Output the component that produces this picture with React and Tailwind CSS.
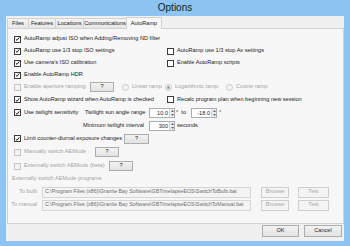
import React from 'react';

const Check = ({ checked, disabled }) => (
  <span
    className={`w-[7px] h-[7px] border flex items-center justify-center shrink-0 ${
      disabled ? 'border-[#c4c4c4] bg-[#f4f4f4]' : 'border-[#3c3c3c] bg-white'
    }`}
  >
    {checked && (
      <svg viewBox="0 0 7 7" className="w-[6px] h-[6px]">
        <path d="M1 3.6 L2.8 5.4 L6 1.2" stroke="#1a1a1a" strokeWidth="1.4" fill="none" />
      </svg>
    )}
  </span>
);

const Radio = ({ selected }) => (
  <span className="w-[7px] h-[7px] rounded-full border border-[#c8c8c8] bg-[#f4f4f4] flex items-center justify-center shrink-0">
    {selected && <span className="w-[3px] h-[3px] rounded-full bg-[#9a9a9a]" />}
  </span>
);

const Btn = ({ children, w, disabled, h = 'h-[10px]' }) => (
  <div
    className={`${w} ${h} shrink-0 border flex items-center justify-center ${
      disabled
        ? 'border-[#cfcfcf] bg-[#f4f4f4] text-[#a8a8a8]'
        : 'border-[#adadad] bg-gradient-to-b from-[#f2f2f2] to-[#e3e3e3] text-[#1e1e1e]'
    }`}
  >
    {children}
  </div>
);

const Spin = ({ value }) => (
  <div className="w-[26px] h-[10px] border border-[#abadb3] bg-white flex shrink-0">
    <div className="flex-1 text-right pr-[1px] leading-[8px] text-[#1e1e1e]">{value}</div>
    <div className="w-[5px] flex flex-col border-l border-[#d4d4d4] bg-[#eeeeee]">
      <div className="flex-1 flex items-center justify-center">
        <svg viewBox="0 0 4 2" className="w-[3px] h-[2px]"><path d="M0 2 L2 0 L4 2Z" fill="#333" /></svg>
      </div>
      <div className="flex-1 flex items-center justify-center">
        <svg viewBox="0 0 4 2" className="w-[3px] h-[2px]"><path d="M0 0 L2 2 L4 0Z" fill="#333" /></svg>
      </div>
    </div>
  </div>
);

const PathBox = ({ children }) => (
  <div className="ml-[5px] w-[209px] h-[11px] border border-[#d5d5d5] bg-[#f4f4f4] flex items-center pl-[2px] text-[5.3px] text-[#6d6d6d] whitespace-nowrap overflow-hidden">
    {children}
  </div>
);

const tabs = [
  { label: 'Files', w: 'w-[22px]' },
  { label: 'Features', w: 'w-[28px]' },
  { label: 'Locations', w: 'w-[29px]' },
  { label: 'Communications', w: 'w-[44px]' },
];

export default function App() {
  const text = 'text-[#1a1a1a]';
  const dim = 'text-[#a3a3a3]';

  return (
    <div className="w-[350px] h-[246px] bg-[#8ec4f2] flex flex-col font-['Liberation_Sans',Arial,sans-serif] text-[5.6px] leading-none whitespace-nowrap overflow-hidden">
      {/* Title bar */}
      <div className="h-[16px] flex items-center justify-center text-[10px] text-[#1b1b1b]">Options</div>

      {/* Client area */}
      <div className="mx-[6px] h-[225px] bg-[#f0f0f0] flex flex-col">
        {/* Tabs */}
        <div className="h-[12px] pl-[1px] flex items-end">
          {tabs.map((t) => (
            <div
              key={t.label}
              className={`${t.w} h-[10px] border border-b-0 border-[#d2d2d2] -ml-[1px] first:ml-0 bg-gradient-to-b from-[#f3f3f3] to-[#e7e7e7] flex items-center justify-center ${text}`}
            >
              {t.label}
            </div>
          ))}
          <div className={`w-[36px] h-[12px] border border-b-0 border-[#d2d2d2] -ml-[1px] -mb-[1px] relative z-10 bg-[#f7f7f7] flex items-center justify-center ${text}`}>
            AutoRamp
          </div>
        </div>

        {/* Panel */}
        <div className={`ml-[1px] w-[337px] h-[196px] border border-[#d2d2d2] bg-[#f7f7f7] flex flex-col pl-[6px] pt-[4px] ${text}`}>
          <div className="h-[12px] flex items-center">
            <Check checked />
            <span className="ml-[3px]">AutoRamp adjust ISO when Adding/Removing ND filter</span>
          </div>
          <div className="h-[12px] flex items-center">
            <div className="w-[153px] flex items-center">
              <Check checked />
              <span className="ml-[3px]">AutoRamp use 1/3 stop ISO settings</span>
            </div>
            <Check />
            <span className="ml-[3px]">AutoRamp use 1/3 stop Av settings</span>
          </div>
          <div className="h-[12px] flex items-center">
            <div className="w-[153px] flex items-center">
              <Check checked />
              <span className="ml-[3px]">Use camera's ISO calibration</span>
            </div>
            <Check />
            <span className="ml-[3px]">Enable AutoRamp scripts</span>
          </div>
          <div className="h-[12px] flex items-center">
            <Check checked />
            <span className="ml-[3px]">Enable AutoRamp HDR</span>
          </div>
          <div className="h-[12px] flex items-center">
            <Check disabled />
            <span className={`ml-[3px] w-[66px] ${dim}`}>Enable aperture ramping</span>
            <Btn w="w-[24px]">?</Btn>
            <div className="ml-[8px] w-[43px] flex items-center">
              <Radio />
              <span className={`ml-[3px] ${dim}`}>Linear ramp</span>
            </div>
            <div className="w-[61px] flex items-center">
              <Radio selected />
              <span className={`ml-[3px] ${dim}`}>Logarithmic ramp</span>
            </div>
            <Radio />
            <span className={`ml-[3px] ${dim}`}>Cosine ramp</span>
          </div>
          <div className="h-[13px] flex items-center">
            <div className="w-[153px] flex items-center">
              <Check checked />
              <span className="ml-[3px]">Show AutoRamp wizard when AutoRamp is checked</span>
            </div>
            <Check />
            <span className="ml-[3px]">Recalc program plan when beginning new session</span>
          </div>
          <div className="h-[13px] flex items-center">
            <Check checked />
            <span className="ml-[3px] w-[61px]">Use twilight sensitivity</span>
            <span className="w-[64px]">Twilight sun angle range</span>
            <Spin value="10.0" />
            <span className="w-[16px] pl-[1px]">°&nbsp;&nbsp;to</span>
            <Spin value="-18.0" />
            <span className="ml-[2px]">°</span>
          </div>
          <div className="h-[13px] flex items-center">
            <span className="w-[135px] text-right pr-[5px]">Minimum twilight interval</span>
            <Spin value="300" />
            <span className="ml-[2px]">seconds</span>
          </div>
          <div className="h-[13px] flex items-center">
            <Check checked />
            <span className="ml-[3px] w-[100px]">Limit counter-diurnal exposure changes</span>
            <Btn w="w-[25px]">?</Btn>
          </div>
          <div className="h-[14px] flex items-center">
            <Check disabled />
            <span className={`ml-[3px] w-[71px] ${dim}`}>Manually switch AEMode</span>
            <Btn w="w-[24px]">?</Btn>
          </div>
          <div className="h-[14px] flex items-center">
            <Check disabled />
            <span className={`ml-[3px] w-[85px] ${dim}`}>Externally switch AEMode (beta)</span>
            <Btn w="w-[24px]">?</Btn>
          </div>
          <div className={`h-[11px] flex items-center -ml-[2px] ${dim}`}>Externally switch AEMode programs</div>
          <div className="mt-[2px] h-[12px] flex items-center -ml-[7px]">
            <span className={`w-[30px] text-right ${dim}`}>To bulb</span>
            <PathBox>C:\Program Files (x86)\Granite Bay Software\GBTimelapseEOS\SwitchToBulb.bat</PathBox>
            <div className="ml-[10px]"><Btn w="w-[28px]" h="h-[11px]" disabled>Browse</Btn></div>
            <div className="ml-[9px]"><Btn w="w-[31px]" h="h-[11px]" disabled>Test</Btn></div>
          </div>
          <div className="mt-[1px] h-[12px] flex items-center -ml-[7px]">
            <span className={`w-[30px] text-right ${dim}`}>To manual</span>
            <PathBox>C:\Program Files (x86)\Granite Bay Software\GBTimelapseEOS\SwitchToManual.bat</PathBox>
            <div className="ml-[10px]"><Btn w="w-[28px]" h="h-[11px]" disabled>Browse</Btn></div>
            <div className="ml-[9px]"><Btn w="w-[31px]" h="h-[11px]" disabled>Test</Btn></div>
          </div>
        </div>

        {/* Dialog buttons */}
        <div className="mt-[1px] flex justify-end pr-[2px] gap-[5px]">
          <Btn w="w-[37px]" h="h-[12px]">OK</Btn>
          <Btn w="w-[38px]" h="h-[12px]">Cancel</Btn>
        </div>
      </div>
    </div>
  );
}
